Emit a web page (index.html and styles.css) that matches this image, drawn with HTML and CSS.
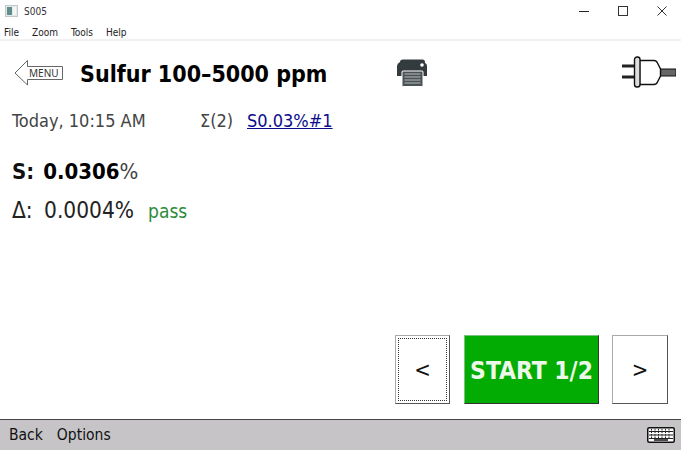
FILE: index.html
```html
<!DOCTYPE html>
<html lang="en">
<head>
<meta charset="UTF-8" />
<title>S005</title>
<link rel="stylesheet" href="styles.css">
</head>
<body>

<div class="window">
  <div class="titlebar">
    <svg class="app-icon" width="13" height="12" viewBox="0 0 13 12">
      <rect x="0.5" y="0.5" width="12" height="11" fill="#e4e8e8" stroke="#c4c8c8"/>
      <rect x="2" y="2" width="5" height="8" fill="#5f8f8c"/>
      <rect x="8" y="2" width="3" height="8" fill="#f4f6f6"/>
    </svg>
    <span class="title-text">S005</span>
    <div class="window-controls">
      <svg width="10" height="10" viewBox="0 0 10 10"><path d="M0 5.5H10" stroke="#222" fill="none"/></svg>
      <svg width="10" height="10" viewBox="0 0 10 10"><rect x="0.5" y="0.5" width="9" height="9" stroke="#333" fill="none"/></svg>
      <svg width="10" height="10" viewBox="0 0 10 10"><path d="M0.5 0.5L9.5 9.5M9.5 0.5L0.5 9.5" stroke="#333" fill="none"/></svg>
    </div>
  </div>

  <div class="menubar">
    <span>File</span>
    <span>Zoom</span>
    <span>Tools</span>
    <span>Help</span>
  </div>

  <main class="content">
    <div class="header">
      <button class="menu-back">
        <svg width="50" height="26" viewBox="0 0 50 26">
          <path d="M13.5 0.500L1 13L13.5 25V19.500H48.500V6.500H13.500Z" fill="#fff" stroke="#666"/>
          <text x="15" y="17" class="menu-label">MENU</text>
        </svg>
      </button>
      <h1>Sulfur 100–5000 ppm</h1>
      <svg class="printer" width="32" height="28" viewBox="0 0 32 28">
        <path d="M4 3Q4 0.500 7 0.500H27Q29 0.500 29 3V4Q31 4.500 31 7V17H27V12H6V17H1V7Q1 4.500 4 3Z" fill="#333b3f"/>
        <circle cx="26" cy="6" r="1.800" fill="#fff"/>
        <rect x="6" y="12" width="21" height="15.500" rx="1" fill="#4a5256" stroke="#fff" stroke-width="1"/>
        <path d="M8.500 15H24.500M8.500 18H24.500M8.500 21H24.500M8.500 24H24.500" stroke="#b8bcbc" stroke-width="1.200"/>
      </svg>
      <svg class="plug" width="54" height="32" viewBox="0 0 54 32">
        <path d="M0 10H12M0 21H12" stroke="#222" stroke-width="3" fill="none"/>
        <rect x="37" y="13" width="17" height="7" fill="#666" stroke="#111" stroke-width="1"/>
        <path d="M17.500 4.500H32Q34.500 4.500 35.500 7L38.500 13V20L35.500 26Q34.500 28.500 32 28.500H17.500Z" fill="#fff" stroke="#111" stroke-width="1.400"/>
        <rect x="12.500" y="1" width="5.500" height="30" rx="2.500" fill="#ddd" stroke="#111" stroke-width="1.400"/>
      </svg>
    </div>

    <div class="info-row">
      <span class="info-date">Today, 10:15 AM</span>
      <span class="info-sum">Σ(2)</span>
      <a class="info-link" href="#">S0.03%#1</a>
    </div>

    <div class="result-main"><b>S:</b><span><b>0.0306</b>%</span></div>
    <div class="result-delta">
      <span class="delta-label">Δ:</span>
      <span>0.0004%</span>
      <span class="pass">pass</span>
    </div>

    <div class="actions">
      <button class="side-btn focused"><span>&lt;</span></button>
      <button class="start-btn">START 1/2</button>
      <button class="side-btn"><span>&gt;</span></button>
    </div>
  </main>

  <div class="bottombar">
    <span>Back</span>
    <span>Options</span>
    <svg class="keyboard" width="28" height="16" viewBox="0 0 28 16">
      <rect x="0.750" y="0.750" width="26.500" height="14.500" rx="1.500" fill="#fff" stroke="#111" stroke-width="1.500"/>
      <path d="M2 4.500H26M2 8H26M2 11.500H26" stroke="#222"/>
      <path d="M4.500 2V11M8 2V11M11.500 2V11M15 2V11M18.500 2V11M22 2V11" stroke="#222" stroke-dasharray="1.500 1"/>
      <path d="M7 13H21" stroke="#111" stroke-width="1.500"/>
    </svg>
  </div>
</div>

</body>
</html>
```

FILE: styles.css
```css
body {
  margin: 0;
  background: #fff;
  font-family: 'DejaVu Sans', sans-serif;
  font-stretch: condensed;
  color: #111;
}
.window {
  width: 681px;
  height: 450px;
  display: flex;
  flex-direction: column;
  overflow: hidden;
}
.titlebar {
  height: 22px;
  display: flex;
  align-items: center;
  padding: 0 14px 0 5px;
  font-size: 10px;
  color: #333;
}
.app-icon {
  margin-right: 6px;
}
.window-controls {
  margin-left: auto;
  display: flex;
  gap: 29px;
}
.menubar {
  height: 19px;
  display: flex;
  align-items: center;
  gap: 13px;
  padding: 3px 0 0 4px;
  font-size: 10px;
  color: #222;
  border-bottom: 2px solid #f2f2f2;
  box-sizing: border-box;
}
.content {
  flex: 1;
  display: flex;
  flex-direction: column;
  padding: 0 13px 15px 12px;
}
.header {
  display: flex;
  align-items: center;
  height: 66px;
}
.menu-back {
  border: none;
  background: none;
  padding: 0;
  margin: 0 16px 2px 2px;
  display: flex;
}
.menu-label {
  font-family: 'Noto Sans', sans-serif;
  font-size: 10px;
  fill: #333;
}
h1 {
  margin: 0;
  font-size: 23px;
  font-weight: bold;
  color: #000;
  width: 316px;
  white-space: nowrap;
}
.printer {
  margin-bottom: 2px;
}
.plug {
  margin: 0 -8px 4px auto;
}
.info-row {
  display: flex;
  align-items: center;
  height: 26px;
  font-size: 18px;
  color: #444;
  margin-top: 0;
}
.info-date {
  width: 188px;
}
.info-sum {
  width: 47px;
}
.info-link {
  color: #0b0b8c;
}
.result-main {
  display: flex;
  gap: 9px;
  margin-top: 24px;
  font-size: 22px;
  line-height: 30px;
  color: #111;
}
.result-main span {
  color: #444;
}
.result-main span b {
  color: #000;
}
.result-delta {
  display: flex;
  align-items: baseline;
  margin-top: 8px;
  font-size: 22.500px;
  line-height: 30px;
  color: #222;
}
.delta-label {
  width: 32px;
}
.pass {
  margin-left: 14px;
  font-size: 19px;
  color: #2e8b3a;
}
.actions {
  margin-top: auto;
  display: flex;
  justify-content: flex-end;
  gap: 13px;
}
.actions button {
  height: 69px;
  box-sizing: border-box;
  font-family: inherit;
  font-stretch: inherit;
}
.side-btn {
  width: 56px;
  padding: 2px;
  background: #fff;
  border: 1px solid;
  border-color: #aaa #555 #555 #aaa;
  font-size: 22px;
  color: #111;
}
.side-btn.focused {
  width: 55px;
}
.side-btn span {
  display: flex;
  height: 100%;
  align-items: center;
  justify-content: center;
  box-sizing: border-box;
  border: 1px dotted transparent;
}
.side-btn.focused span {
  border-color: #333;
}
.start-btn {
  width: 135px;
  margin-left: 1px;
  padding: 2px 0 0;
  background: #02ac02;
  border: 1px solid;
  border-color: #7fbf7f #333 #333 #7fbf7f;
  color: #eef8ea;
  font-size: 24.400px;
  font-weight: bold;
  white-space: nowrap;
}
.bottombar {
  height: 31px;
  box-sizing: border-box;
  display: flex;
  align-items: center;
  gap: 14px;
  padding: 0 6px 0 9px;
  background: #c6c4c6;
  border-top: 1px solid #444;
  font-size: 15.500px;
  color: #111;
}
.keyboard {
  margin-left: auto;
}
```
